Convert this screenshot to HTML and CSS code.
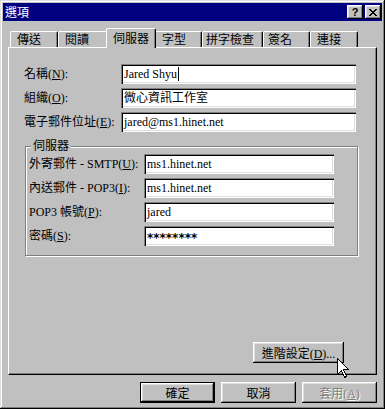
FILE: index.html
```html
<!DOCTYPE html>
<html lang="zh-Hant">
<head>
    <meta charset="UTF-8">
    <title>選項</title>
    <link rel="stylesheet" href="styles.css">
</head>
<body>
<div class="dialog">
    <div class="titlebar">
        <span class="title">選項</span>
        <div class="title-btns">
            <span class="tbtn help">?</span>
            <span class="tbtn">
                <svg width="8" height="7" viewBox="0 0 8 7" shape-rendering="crispEdges">
                    <path d="M0 0h2v1h1v1h2v-1h1v-1h2v1h-1v1h-1v1h-1v1h1v1h1v1h1v1h-2v-1h-1v-1h-2v1h-1v1h-2v-1h1v-1h1v-1h1v-1h-1v-1h-1v-1h-1z" fill="#000"/>
                </svg>
            </span>
        </div>
    </div>

    <div class="tabs">
        <span class="tab">傳送</span>
        <span class="tab">閱讀</span>
        <span class="tab active">伺服器</span>
        <span class="tab">字型</span>
        <span class="tab">拼字檢查</span>
        <span class="tab">簽名</span>
        <span class="tab">連接</span>
    </div>

    <div class="panel">
        <div class="form">
            <label>名稱(<u>N</u>):</label>
            <div class="field">Jared Shyu<span class="caret"></span></div>
            <label>組織(<u>O</u>):</label>
            <div class="field">微心資訊工作室</div>
            <label>電子郵件位址(<u>E</u>):</label>
            <div class="field">jared@ms1.hinet.net</div>
        </div>

        <fieldset class="group">
            <legend>伺服器</legend>
            <div class="form server-form">
                <label>外寄郵件 - SMTP(<u>U</u>):</label>
                <div class="field">ms1.hinet.net</div>
                <label>內送郵件 - POP3(<u>I</u>):</label>
                <div class="field">ms1.hinet.net</div>
                <label>POP3 帳號(<u>P</u>):</label>
                <div class="field">jared</div>
                <label>密碼(<u>S</u>):</label>
                <div class="field password">********</div>
            </div>
        </fieldset>

        <button class="btn adv">進階設定(<u>D</u>)...</button>
    </div>

    <div class="actions">
        <button class="btn default">確定</button>
        <button class="btn">取消</button>
        <button class="btn disabled">套用(<u>A</u>)</button>
    </div>

    <!-- mouse pointer over the advanced button -->
    <svg class="cursor" width="13" height="20" viewBox="0 0 13 20" shape-rendering="crispEdges">
        <path d="M0.5 0.5V16.5L4.5 12.5L7.5 19.5L9.5 18.5L6.5 11.5H11.5Z" fill="#fff" stroke="#000"/>
    </svg>
</div>
</body>
</html>
```

FILE: styles.css
```css
* {
    box-sizing: border-box;
}
body {
    margin: 0;
    font-family: "Liberation Serif", "Noto Sans CJK TC", serif;
    font-size: 12px;
    color: #000;
}
.dialog {
    position: relative;
    width: 385px;
    height: 409px;
    padding: 3px;
    background: #c0c0c0;
    box-shadow: inset -1px -1px #000, inset 1px 1px #dfdfdf,
                inset -2px -2px #808080, inset 2px 2px #fff;
}
.titlebar {
    display: flex;
    align-items: center;
    justify-content: space-between;
    height: 18px;
    padding: 0 1px 0 2px;
    background: #000080;
    color: #fff;
}
.title {
    font-family: "Noto Sans CJK TC", sans-serif;
    line-height: 18px;
}
.title-btns {
    display: flex;
    gap: 2px;
}
.tbtn {
    display: flex;
    align-items: center;
    justify-content: center;
    width: 16px;
    height: 14px;
    background: #c0c0c0;
    color: #000;
    box-shadow: inset -1px -1px #000, inset 1px 1px #fff,
                inset -2px -2px #808080, inset 2px 2px #dfdfdf;
}
.tbtn.help {
    font: bold 11px "Liberation Sans", sans-serif;
    line-height: 14px;
}
.tabs {
    display: flex;
    align-items: flex-end;
    height: 19px;
    margin-top: 7px;
    padding-left: 7px;
}
.tab {
    height: 16px;
    padding-left: 6px;
    line-height: 14px;
    font-family: "Noto Sans CJK TC", sans-serif;
    background: #c0c0c0;
    border-top: 1px solid #fff;
    border-left: 1px solid #fff;
    border-right: 1px solid #000;
    border-radius: 2px 2px 0 0;
    box-shadow: inset -1px 0 #808080;
}
.tab:nth-child(1) { width: 48px; }
.tab:nth-child(2) { width: 50px; }
.tab:nth-child(4) { width: 48px; padding-left: 7px; }
.tab:nth-child(5) { width: 61px; padding-left: 3px; }
.tab:nth-child(6) { width: 47px; padding-left: 4px; }
.tab:nth-child(7) { width: 48px; }
.tab.active {
    position: relative;
    z-index: 1;
    width: 50px;
    height: 20px;
    margin: 0 -2px -1px;
    padding-top: 2px;
}
.panel {
    display: flex;
    flex-direction: column;
    width: 369px;
    height: 328px;
    margin-left: 5px;
    padding: 16px 0 11px 15px;
    border-top: 1px solid #fff;
    border-left: 1px solid #fff;
    border-right: 1px solid #000;
    border-bottom: 1px solid #000;
    box-shadow: inset -1px -1px #808080;
}
.form {
    display: grid;
    grid-template-columns: 97px 235px;
    grid-auto-rows: 20px;
    row-gap: 4px;
    align-items: center;
}
.form label {
    line-height: 20px;
    white-space: nowrap;
}
.field {
    height: 20px;
    padding: 2px 1px 0 3px;
    line-height: 16px;
    background: #fff;
    white-space: nowrap;
    overflow: hidden;
    box-shadow: inset 1px 1px #808080, inset 2px 2px #000,
                inset -1px -1px #fff, inset -2px -2px #dfdfdf;
}
.field.password {
    padding-top: 4px;
    font: bold 12px "DejaVu Sans", sans-serif;
    line-height: 16px;
}
.caret {
    display: inline-block;
    width: 1px;
    height: 14px;
    margin-left: 1px;
    vertical-align: -3px;
    background: #000;
}
.group {
    width: 333px;
    margin: 7px 0 0 1px;
    padding: 1px 0 9px 3px;
    border: 1px solid #808080;
    box-shadow: inset 1px 1px #fff, 1px 1px #fff;
}
.group legend {
    margin-left: 2px;
    padding: 0 2px;
    line-height: 14px;
    background: #c0c0c0;
}
.server-form {
    grid-template-columns: 115px 190px;
}
.btn {
    height: 21px;
    padding: 0;
    font: inherit;
    color: #000;
    background: #c0c0c0;
    border: none;
    box-shadow: inset -1px -1px #000, inset 1px 1px #fff,
                inset -2px -2px #808080, inset 2px 2px #dfdfdf;
}
.adv {
    align-self: flex-end;
    width: 91px;
    margin-top: auto;
    margin-right: 32px;
}
.actions {
    display: flex;
    justify-content: flex-end;
    gap: 6px;
    margin: 7px 5px 0 0;
}
.actions .btn {
    width: 75px;
}
.btn.default {
    box-shadow: inset 0 0 0 1px #000, inset -2px -2px #000, inset 2px 2px #fff,
                inset -3px -3px #808080, inset 3px 3px #dfdfdf;
}
.btn.disabled {
    color: #808080;
    text-shadow: 1px 1px #fff;
}
.cursor {
    position: absolute;
    left: 337px;
    top: 358px;
}
```
